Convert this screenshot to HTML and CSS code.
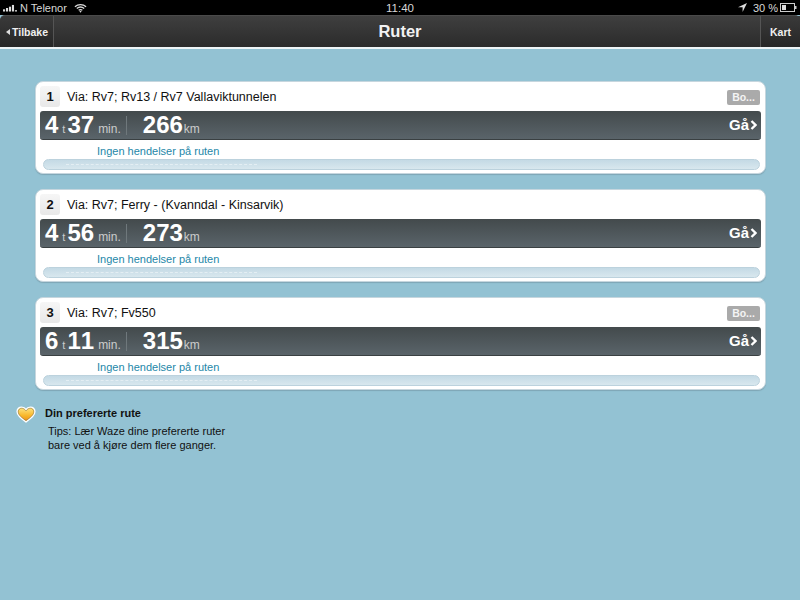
FILE: index.html
```html
<!DOCTYPE html>
<html lang="no">
<head>
    <meta charset="UTF-8">
    <title>Ruter</title>
    <link rel="stylesheet" href="styles.css">
</head>
<body>
    <!-- status bar -->
    <div class="status-bar">
        <div class="status-left">
            <svg class="signal" viewBox="0 0 16 8" width="14" height="8">
                <rect x="0" y="5.5" width="2.4" height="2.5"/>
                <rect x="3.4" y="4" width="2.4" height="4"/>
                <rect x="6.8" y="2.5" width="2.4" height="5.5"/>
                <rect x="10.2" y="0.5" width="2.4" height="7.5"/>
                <rect x="13.6" y="6.5" width="2.4" height="1.5"/>
            </svg>
            <span>N Telenor</span>
            <svg class="wifi" viewBox="0 0 14 10" width="13" height="10">
                <path d="M1 3.6C4.4.6 9.6.6 13 3.6M3 5.6C5.3 3.7 8.7 3.7 11 5.6M5 7.5C6.2 6.6 7.8 6.6 9 7.5" fill="none" stroke="#ddd" stroke-width="1.4"/>
                <path d="M7 10L5.8 8.6C6.5 8.2 7.5 8.2 8.2 8.6z" fill="#ddd"/>
            </svg>
        </div>
        <div class="status-time">11:40</div>
        <div class="status-right">
            <svg viewBox="0 0 9 9" width="9" height="9"><path d="M9 0L0 4.2h4.6V9z" fill="#ddd"/></svg>
            <span>30 %</span>
            <svg viewBox="0 0 17 9" width="17" height="9">
                <rect x="0.5" y="0.5" width="14" height="8" fill="none" stroke="#ccc"/>
                <rect x="2" y="2" width="4" height="5" fill="#ddd"/>
                <rect x="15" y="3" width="1.5" height="3" fill="#ccc"/>
            </svg>
        </div>
    </div>

    <!-- nav bar -->
    <header class="nav-bar">
        <div class="nav-btn nav-back"><span class="back-arrow"></span>Tilbake</div>
        <div class="nav-title">Ruter</div>
        <div class="nav-btn nav-map">Kart</div>
    </header>

    <div class="main-content">
        <div class="route-card">
            <div class="route-head">
                <div class="route-num">1</div>
                <div class="route-via">Via: Rv7; Rv13 / Rv7 Vallaviktunnelen</div>
                <div class="route-more">Bo...</div>
            </div>
            <div class="route-bar">
                <span class="big">4</span><span class="unit-t">t</span><span class="big">37</span><span class="unit-min">min.</span>
                <span class="divider"></span>
                <span class="big">266</span><span class="unit-km">km</span>
                <span class="go">Gå<svg viewBox="0 0 7 12" width="7" height="12"><path d="M1.5 2l4 4-4 4" fill="none" stroke="#fff" stroke-width="2.4"/></svg></span>
            </div>
            <div class="route-events">Ingen hendelser på ruten</div>
            <div class="route-progress"><div class="dashes"></div></div>
        </div>

        <div class="route-card">
            <div class="route-head">
                <div class="route-num">2</div>
                <div class="route-via">Via: Rv7; Ferry - (Kvanndal - Kinsarvik)</div>
            </div>
            <div class="route-bar">
                <span class="big">4</span><span class="unit-t">t</span><span class="big">56</span><span class="unit-min">min.</span>
                <span class="divider"></span>
                <span class="big">273</span><span class="unit-km">km</span>
                <span class="go">Gå<svg viewBox="0 0 7 12" width="7" height="12"><path d="M1.5 2l4 4-4 4" fill="none" stroke="#fff" stroke-width="2.4"/></svg></span>
            </div>
            <div class="route-events">Ingen hendelser på ruten</div>
            <div class="route-progress"><div class="dashes"></div></div>
        </div>

        <div class="route-card">
            <div class="route-head">
                <div class="route-num">3</div>
                <div class="route-via">Via: Rv7; Fv550</div>
                <div class="route-more">Bo...</div>
            </div>
            <div class="route-bar">
                <span class="big">6</span><span class="unit-t">t</span><span class="big">11</span><span class="unit-min">min.</span>
                <span class="divider"></span>
                <span class="big">315</span><span class="unit-km">km</span>
                <span class="go">Gå<svg viewBox="0 0 7 12" width="7" height="12"><path d="M1.5 2l4 4-4 4" fill="none" stroke="#fff" stroke-width="2.4"/></svg></span>
            </div>
            <div class="route-events">Ingen hendelser på ruten</div>
            <div class="route-progress"><div class="dashes"></div></div>
        </div>

        <!-- preferred route tip -->
        <div class="tip">
            <svg class="heart" viewBox="0 0 20 17" width="20" height="17">
                <defs>
                    <linearGradient id="heartFill" x1="0" y1="0" x2="0" y2="1">
                        <stop offset="0" stop-color="#fde88a"/>
                        <stop offset="0.55" stop-color="#f9b92e"/>
                        <stop offset="1" stop-color="#ea8a12"/>
                    </linearGradient>
                </defs>
                <path d="M10 15.8C5 12.5 1.2 9.6 1.2 5.6 1.2 3 3.2 1.2 5.6 1.2 7.5 1.2 9 2.1 10 3.4 11 2.1 12.5 1.2 14.4 1.2 16.8 1.2 18.8 3 18.8 5.6 18.8 9.6 15 12.5 10 15.8z" fill="url(#heartFill)" stroke="#fff" stroke-width="1.6"/>
                <path d="M10 14.6C6 12 2.2 9.2 2.2 5.6 2.2 3.6 3.8 2.2 5.6 2.2 7.5 2.2 9 3.4 10 4.8 11 3.4 12.5 2.2 14.4 2.2 16.2 2.2 17.8 3.6 17.8 5.6 17.8 9.2 14 12 10 14.6z" fill="none" stroke="#5c4210" stroke-width="0.6" opacity="0.7"/>
            </svg>
            <div class="tip-text">
                <div class="tip-title">Din prefererte rute</div>
                <div class="tip-body">Tips: Lær Waze dine prefererte ruter<br>bare ved å kjøre dem flere ganger.</div>
            </div>
        </div>
    </div>
</body>
</html>
```

FILE: styles.css
```css
* {
    margin: 0;
    padding: 0;
    box-sizing: border-box;
}

body {
    width: 800px;
    height: 600px;
    overflow: hidden;
    background-color: #93c2d3;
    font-family: 'Liberation Sans', sans-serif;
}

/* status bar */
.status-bar {
    display: grid;
    grid-template-columns: 1fr auto 1fr;
    align-items: center;
    height: 15px;
    padding: 0 3px;
    background-color: #000;
    color: #d8d8d8;
    font-size: 11px;
}

.status-left,
.status-right {
    display: flex;
    align-items: center;
}

.signal {
    fill: #ddd;
}

.status-left span {
    margin-left: 3px;
    margin-right: 7px;
}

.status-right {
    justify-content: flex-end;
    gap: 2px;
}

.status-right span {
    margin-left: 4px;
}

.status-time {
    font-size: 11.5px;
}

/* nav bar */
.nav-bar {
    display: flex;
    align-items: stretch;
    justify-content: space-between;
    height: 34px;
    background: linear-gradient(#3f3f3f, #2b2b2b);
    border-top: 1px solid #4a4a4a;
    border-bottom: 2px solid #eef4f6;
    border-radius: 5px 5px 0 0;
}

.nav-btn {
    display: flex;
    align-items: center;
    color: #f0f0f0;
    font-size: 10.5px;
    font-weight: bold;
}

.nav-back {
    width: 54px;
    padding-left: 6px;
    background: linear-gradient(#3a3a3a, #262626);
    border-right: 1px solid #555;
    border-radius: 5px 0 0 0;
}

.back-arrow {
    width: 0;
    height: 0;
    margin-right: 2px;
    border-top: 3px solid transparent;
    border-bottom: 3px solid transparent;
    border-right: 4px solid #ddd;
}

.nav-map {
    width: 40px;
    padding-left: 9px;
    background: linear-gradient(#3a3a3a, #262626);
    border-left: 1px solid #555;
}

.nav-title {
    align-self: center;
    margin-left: -14px;
    color: #f2f2f2;
    font-size: 16.5px;
    font-weight: bold;
}

.main-content {
    padding: 32px 34px 0 16px;
}

/* route card */
.route-card {
    display: flex;
    flex-direction: column;
    width: 731px;
    height: 93px;
    margin-left: 19px;
    margin-bottom: 15px;
    padding: 3px 4px 0;
    background-color: #fff;
    border: 1px solid #c6d6de;
    border-radius: 8px;
    box-shadow: 0 1px 1px #7fa6b5;
}

.route-head {
    display: flex;
    align-items: center;
    height: 26px;
    padding-bottom: 3px;
}

.route-num {
    display: flex;
    align-items: center;
    justify-content: center;
    width: 20px;
    height: 21px;
    background: linear-gradient(#f6f6f6, #e8e8e8);
    border-radius: 3px;
    color: #111;
    font-size: 13px;
    font-weight: bold;
}

.route-via {
    flex: 1;
    margin-left: 7px;
    color: #111;
    font-size: 12.5px;
}

.route-more {
    width: 33px;
    height: 15px;
    margin-top: 1px;
    margin-right: 1px;
    background-color: #aaa;
    border-radius: 2px;
    color: #f4f4f4;
    font-size: 10.5px;
    font-weight: bold;
    line-height: 15px;
    text-align: center;
}

.route-bar {
    display: flex;
    align-items: baseline;
    height: 29px;
    padding: 0 4px 0 5px;
    background: linear-gradient(#434a4c, #5a646a);
    border: 1px solid #3a4042;
    border-width: 0 0 1px;
    border-radius: 3px;
    color: #fff;
    line-height: 28px;
}

.big {
    font-size: 24px;
    font-weight: bold;
    font-kerning: none;
}

.unit-t {
    margin: 0 2px 0 4px;
    color: #ccc;
    font-size: 11px;
}

.unit-min {
    margin-left: 4px;
    color: #ccc;
    font-size: 12px;
}

.divider {
    align-self: center;
    width: 1px;
    height: 19px;
    margin: 0 16px 0 5px;
    background-color: #6f787c;
}

.unit-km {
    margin-left: 1px;
    color: #ccc;
    font-size: 12px;
}

.go {
    display: flex;
    align-items: center;
    gap: 1px;
    margin-left: auto;
    align-self: center;
    font-size: 15px;
    font-weight: bold;
    line-height: 20px;
}

.route-events {
    margin-top: 5px;
    margin-left: 57px;
    color: #2487a8;
    font-size: 11px;
    line-height: 13px;
}

.route-progress {
    display: flex;
    align-items: center;
    width: 717px;
    height: 11px;
    margin-top: 1px;
    margin-left: 3px;
    padding-left: 22px;
    background: linear-gradient(#c4dae5, #d8e7ee);
    border: 1px solid #bcd2dd;
    border-radius: 6px;
}

.dashes {
    width: 191px;
    border-top: 1px dashed #e4eef3;
}

/* tip */
.tip {
    display: flex;
    margin-top: 1px;
}

.heart {
    flex: none;
    margin-top: 1px;
}

.tip-text {
    margin-left: 9px;
    padding-top: 1px;
    color: #111;
    font-size: 11px;
}

.tip-title {
    font-weight: bold;
    line-height: 14px;
}

.tip-body {
    margin-top: 4px;
    margin-left: 3px;
    line-height: 14px;
}
```
